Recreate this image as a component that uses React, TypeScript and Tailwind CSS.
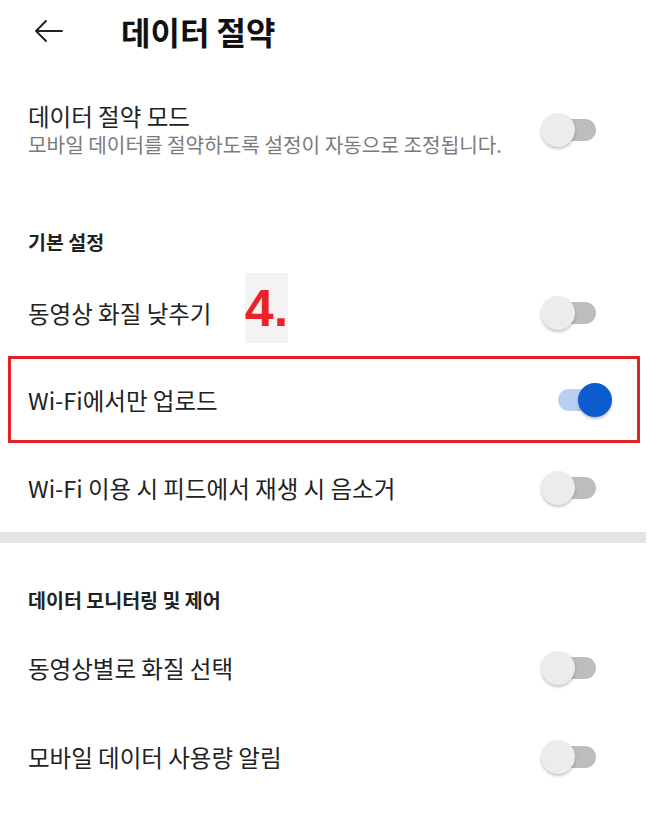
import React from "react";

const FONT = { fontFamily: '"Noto Sans CJK KR", "Noto Sans", sans-serif' };

function Toggle({ on = false }: { on?: boolean }) {
  return (
    <div className="relative w-[42px] h-[22px] shrink-0">
      <div
        className={
          on
            ? "absolute inset-0 rounded-full bg-[#b9d0f2]"
            : "absolute inset-0 rounded-full bg-[#bdbdbd]"
        }
      />
      <div
        className={
          on
            ? "absolute top-[-6px] left-[20px] w-[34px] h-[34px] rounded-full bg-[#0a5ccf] shadow-[0_2px_3px_rgba(0,0,0,0.25)]"
            : "absolute top-[-6px] left-[-13px] w-[34px] h-[34px] rounded-full bg-[#ececec] shadow-[0_2px_3px_rgba(0,0,0,0.22)]"
        }
      />
    </div>
  );
}

function Row({ label, on = false, h = "h-[88px]" }: { label: string; on?: boolean; h?: string }) {
  return (
    <div className={`flex items-center justify-between pl-[28px] pr-[52px] ${h}`}>
      <span className="text-[23.5px] leading-[30px] text-[#222222]">{label}</span>
      <Toggle on={on} />
    </div>
  );
}

export default function App() {
  return (
    <div className="w-[648px] h-[823px] bg-white overflow-hidden" style={FONT}>
      {/* Header */}
      <div className="h-[62px] flex items-center">
        <div className="w-[121px] flex items-center pl-[33px]">
          <svg width="31" height="24" viewBox="0 0 31 24" fill="none">
            <path d="M29 12H3M13 2L3 12l10 10" stroke="#222" strokeWidth="2" strokeLinecap="round" strokeLinejoin="round" />
          </svg>
        </div>
        <span className="text-[32px] leading-[40px] font-bold text-[#111111]">데이터 절약</span>
      </div>

      {/* Data saving mode */}
      <div className="mt-[24px] h-[88px] flex items-center justify-between pl-[28px] pr-[52px]">
        <div className="flex flex-col">
          <span className="text-[23.5px] leading-[30px] text-[#222222]">데이터 절약 모드</span>
          <span className="text-[20.2px] leading-[28px] text-[#7b7b7b]">
            모바일 데이터를 절약하도록 설정이 자동으로 조정됩니다.
          </span>
        </div>
        <Toggle />
      </div>

      {/* Section: basic */}
      <div className="h-[95px] pt-[55px] pl-[28px]">
        <span className="block text-[19.5px] leading-[26px] font-bold text-[#222222]">기본 설정</span>
      </div>

      <div className="relative">
        <Row label="동영상 화질 낮추기" h="h-[87px]" />
        <div className="absolute left-[245px] top-[4px] w-[43px] h-[70px] bg-[#f3f3f3] flex items-center justify-center">
          <span className="text-[52px] leading-none font-bold text-[#ec2229]" style={{ fontFamily: '"Liberation Sans", Arial, sans-serif' }}>
            4.
          </span>
        </div>
      </div>

      {/* Highlighted row */}
      <div className="mx-[8px] h-[87px] border-[3px] border-[#e0212a] flex items-center justify-between pl-[17px] pr-[37px]">
        <span className="text-[23.5px] leading-[30px] text-[#222222]">Wi-Fi에서만 업로드</span>
        <Toggle on />
      </div>

      <Row label="Wi-Fi 이용 시 피드에서 재생 시 음소거" h="h-[89px]" />

      {/* Divider */}
      <div className="h-[11px] mr-[2px] bg-[#e4e4e4]" />

      {/* Section: monitoring */}
      <div className="h-[81px] pt-[44px] pl-[28px]">
        <span className="block text-[19.5px] leading-[26px] font-bold text-[#222222]">데이터 모니터링 및 제어</span>
      </div>

      <Row label="동영상별로 화질 선택" h="h-[88px]" />
      <Row label="모바일 데이터 사용량 알림" h="h-[89px]" />
    </div>
  );
}
